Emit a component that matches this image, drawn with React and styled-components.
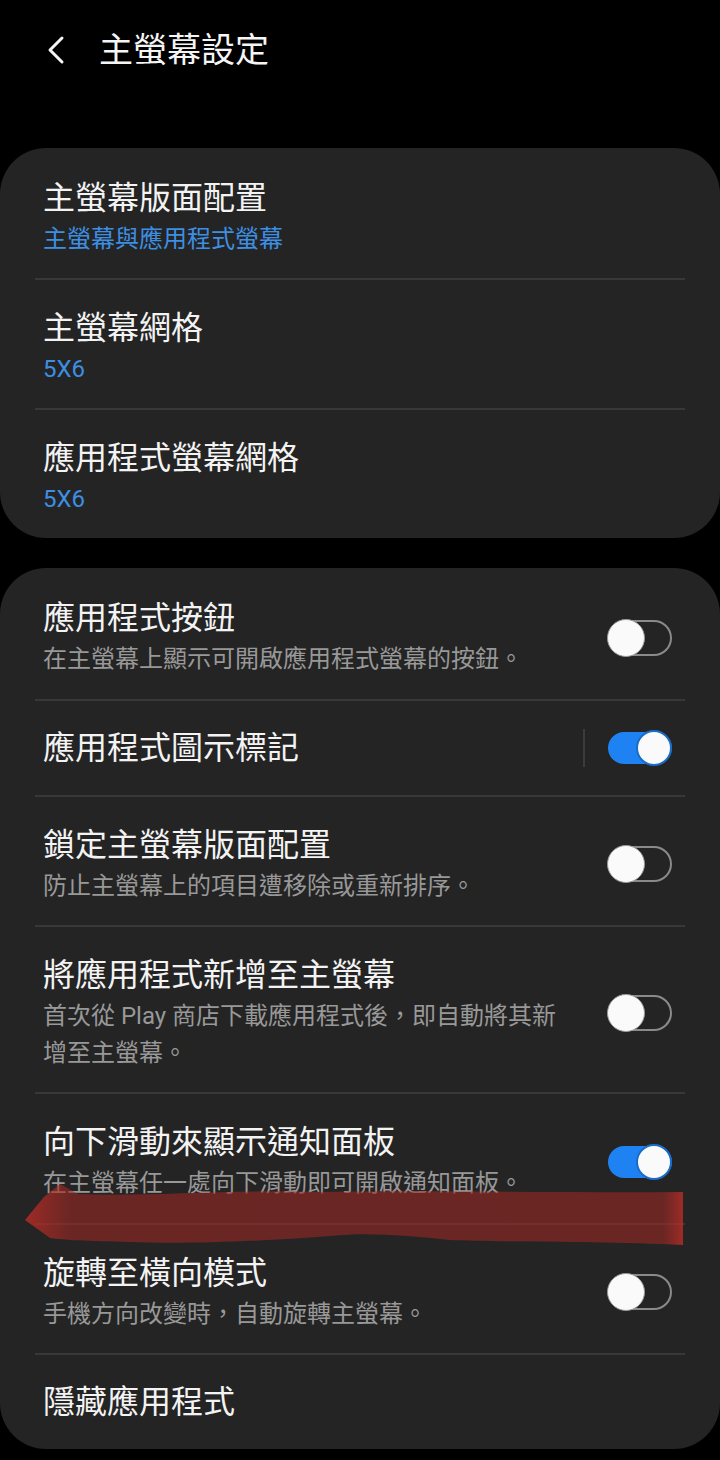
import React from "react";
import styled, { createGlobalStyle } from "styled-components";

const GlobalStyle = createGlobalStyle`
  html, body {
    margin: 0;
    padding: 0;
    background: #000;
  }
  body {
    font-family: Roboto, "Noto Sans CJK TC", "Noto Sans", sans-serif;
    -webkit-font-smoothing: antialiased;
  }
`;

const layoutItems = [
  { title: "主螢幕版面配置", value: "主螢幕與應用程式螢幕" },
  { title: "主螢幕網格", value: "5X6" },
  { title: "應用程式螢幕網格", value: "5X6" },
];

const toggleItems = [
  { title: "應用程式按鈕", desc: "在主螢幕上顯示可開啟應用程式螢幕的按鈕。", on: false },
  { title: "應用程式圖示標記", on: true, split: true },
  { title: "鎖定主螢幕版面配置", desc: "防止主螢幕上的項目遭移除或重新排序。", on: false },
  {
    title: "將應用程式新增至主螢幕",
    desc: "首次從 Play 商店下載應用程式後，即自動將其新增至主螢幕。",
    on: false,
  },
  { title: "向下滑動來顯示通知面板", desc: "在主螢幕任一處向下滑動即可開啟通知面板。", on: true },
  { title: "旋轉至橫向模式", desc: "手機方向改變時，自動旋轉主螢幕。", on: false },
  { title: "隱藏應用程式" },
];

const Switch = ({ on }) => (
  <SwitchBox>
    <Track $on={on} />
    <Knob $on={on} />
  </SwitchBox>
);

const App = () => {
  return (
    <Page>
      <GlobalStyle />
      <Header>
        <BackIcon width="20" height="30" viewBox="0 0 20 30">
          <polyline points="16,3 4,15 16,27" />
        </BackIcon>
        <HeaderTitle>主螢幕設定</HeaderTitle>
      </Header>

      <Card>
        {layoutItems.map((item, idx) => (
          <Row key={idx}>
            <Text>
              <Title>{item.title}</Title>
              <Value>{item.value}</Value>
            </Text>
          </Row>
        ))}
      </Card>

      <Card>
        {toggleItems.map((item, idx) => (
          <Row key={idx} $single={!item.desc}>
            <Text>
              <Title>{item.title}</Title>
              {item.desc && <Desc>{item.desc}</Desc>}
            </Text>
            {item.split && <Split />}
            {item.on !== undefined && <Switch on={item.on} />}
          </Row>
        ))}
      </Card>

      {/* hand-drawn red highlight stroke over the list */}
      <Marker viewBox="0 0 720 1460" width="720" height="1460">
        <defs>
          <linearGradient id="brush" x1="25" y1="0" x2="683" y2="0" gradientUnits="userSpaceOnUse">
            <stop offset="0" stopColor="rgb(190,45,38)" stopOpacity="0.8" />
            <stop offset="0.07" stopColor="rgb(160,40,36)" stopOpacity="0.57" />
            <stop offset="0.97" stopColor="rgb(160,40,36)" stopOpacity="0.57" />
            <stop offset="1" stopColor="rgb(190,45,38)" stopOpacity="0.8" />
          </linearGradient>
        </defs>
        <path
          d="M25,1220 L44,1197 L60,1184 L78,1194 C150,1197 230,1189 320,1192 C420,1190 560,1193 683,1192 L683,1245 C600,1241 500,1242 450,1240 C410,1236 370,1232 330,1236 C250,1242 180,1244 130,1242 C90,1241 62,1240 50,1238 Z"
          fill="url(#brush)"
        />
      </Marker>
    </Page>
  );
};

const Page = styled.div`
  position: relative;
  width: 720px;
  min-height: 1460px;
  background: #000;
  overflow: hidden;
`;

const Header = styled.div`
  display: flex;
  align-items: center;
  height: 100px;
  padding-left: 46px;
  margin-bottom: 48px;
  gap: 33px;
`;

const BackIcon = styled.svg`
  fill: none;
  stroke: #f5f5f5;
  stroke-width: 3;
  stroke-linecap: round;
  stroke-linejoin: round;
`;

const HeaderTitle = styled.h1`
  margin: 0;
  font-size: 34px;
  font-weight: 400;
  color: #f5f5f5;
  line-height: 1;
`;

const Card = styled.div`
  background: #242424;
  border-radius: 46px;
  padding: 0 35px;
  margin-bottom: 30px;
`;

const Row = styled.div`
  display: flex;
  align-items: center;
  padding: ${(p) => (p.$single ? "27px 13px 27px 8px" : "28px 13px 21px 8px")};
  border-top: 2px solid #383838;

  &:first-child {
    border-top: none;
    padding-top: ${(p) => (p.$single ? "29px" : "30px")};
  }
`;

const Text = styled.div`
  flex: 1;
  min-width: 0;
  padding-right: 40px;
`;

const Title = styled.div`
  font-size: 32px;
  line-height: 40px;
  color: #f3f3f3;
`;

const Value = styled.div`
  margin-top: 3px;
  font-size: 24px;
  line-height: 36px;
  color: #3d8fe3;
`;

const Desc = styled.div`
  margin-top: 3px;
  font-size: 24px;
  line-height: 36.5px;
  color: #989898;
`;

const Split = styled.div`
  width: 2px;
  height: 38px;
  background: #3c3c3c;
  margin-right: 22px;
  margin-left: -20px;
`;

const SwitchBox = styled.div`
  position: relative;
  flex-shrink: 0;
  width: 65px;
  height: 38px;
`;

const Track = styled.div`
  position: absolute;
  box-sizing: border-box;
  top: ${(p) => (p.$on ? "3px" : "1px")};
  bottom: ${(p) => (p.$on ? "3px" : "1px")};
  left: ${(p) => (p.$on ? "1px" : "7px")};
  right: 0;
  border-radius: 18px;
  background: ${(p) => (p.$on ? "#1f82f2" : "transparent")};
  border: ${(p) => (p.$on ? "none" : "2px solid #8a8a8a")};
`;

const Knob = styled.div`
  position: absolute;
  box-sizing: border-box;
  top: ${(p) => (p.$on ? "1px" : "0")};
  left: ${(p) => (p.$on ? "29px" : "0")};
  width: ${(p) => (p.$on ? "36px" : "38px")};
  height: ${(p) => (p.$on ? "36px" : "38px")};
  border-radius: 50%;
  background: #fafafa;
  border: ${(p) => (p.$on ? "2px solid #1a6cc9" : "1px solid #9a9a9a")};
`;

const Marker = styled.svg`
  position: absolute;
  top: 0;
  left: 0;
  pointer-events: none;
`;

export default App;
